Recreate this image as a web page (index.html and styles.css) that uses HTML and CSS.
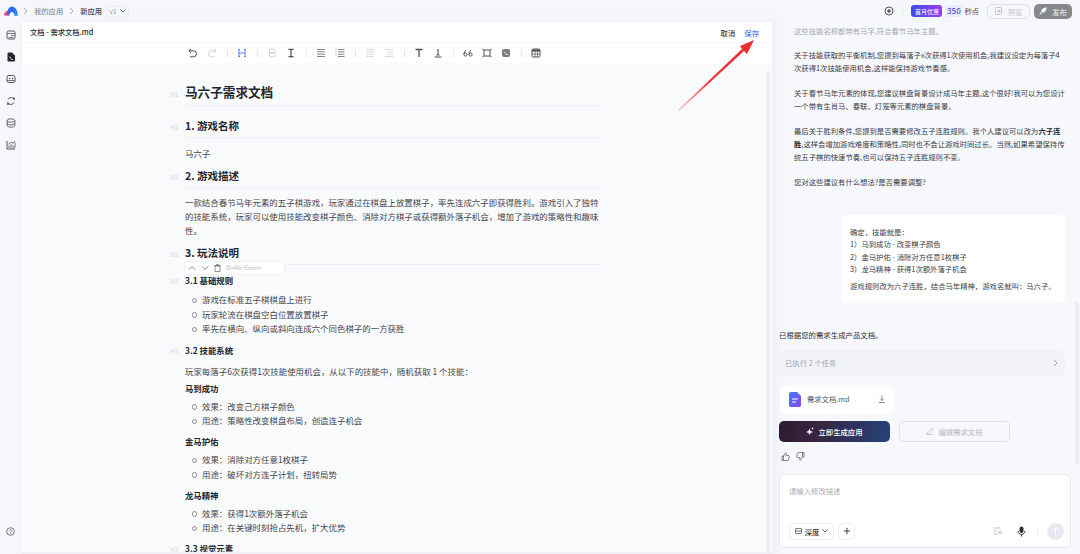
FILE: index.html
```html
<!DOCTYPE html>
<html lang="zh-CN">
<head>
<meta charset="utf-8">
<title>马六子需求文档</title>
<link rel="stylesheet" href="styles.css">
</head>
<body>
<header class="topbar">
  <div class="crumbs">
    <svg class="logo" width="14" height="10" viewBox="0 0 14 10"><path d="M0 9.500C0 6.500 1.800 4.800 4 5L5.500 9.500Z" fill="#f0488c"/><path d="M2.800 9.500C3 4 5 .5 8 .5s5.600 3.500 5.800 9h-3.300C10.200 7.500 9.200 6 8 6S5.500 7.500 5.200 9.500Z" fill="#2b6cf0"/><path d="M11 4l2.800 5.500h-3.400z" fill="#18a6e8"/></svg>
    <svg class="chev" width="5" height="8" viewBox="0 0 5 8"><path d="M1 1l3 3-3 3" fill="none" stroke="#a9adb6"/></svg>
    <span class="crumb">我的应用</span>
    <svg class="chev" width="5" height="8" viewBox="0 0 5 8"><path d="M1 1l3 3-3 3" fill="none" stroke="#a9adb6"/></svg>
    <span class="crumb crumb-now">新应用</span>
    <span class="version">v1 <svg width="6" height="4" viewBox="0 0 6 4"><path d="M.5.500 3 3 5.500.500" fill="none" stroke="#777"/></svg></span>
  </div>
  <div class="top-actions">
    <svg width="10" height="10" viewBox="0 0 10 10"><circle cx="5" cy="5" r="4" fill="none" stroke="#555" stroke-width="1"/><circle cx="5" cy="5" r="1.800" fill="#555"/></svg>
    <i class="top-sep"></i>
    <span class="promo">首月优惠</span>
    <span class="points">350</span>
    <span class="points-label">秒点</span>
    <span class="btn-preview"><svg width="8" height="8" viewBox="0 0 8 8"><rect x=".5" y=".5" width="6" height="7" rx="1" fill="none" stroke="#c2c5cc"/><circle cx="4" cy="4" r="1.500" fill="#c2c5cc"/></svg>预览</span>
    <span class="btn-publish"><svg width="8" height="8" viewBox="0 0 8 8"><path d="M7.500.500C5 .5 3 1.500 2 4L4 6C6.500 5 7.500 3 7.500.500ZM1.500 5 .5 7.500 3 6.500Z" fill="#fff"/></svg>发布</span>
  </div>
</header>

<div class="main">
  <nav class="sidebar">
    <div class="side-top">
      <svg width="10" height="10" viewBox="0 0 10 10"><rect x="1" y="1" width="8" height="8" rx="1.500" fill="none" stroke="#555" stroke-width="1"/><path d="M1 3.500h8M5 5.500h3M2.500 7.500h5" stroke="#555" stroke-width=".8"/></svg>
      <svg width="10" height="10" viewBox="0 0 10 10"><path d="M1.500 1.500A1 1 0 0 1 2.500.5H6L9 3.500V8.500A1 1 0 0 1 8 9.500H2.500A1 1 0 0 1 1.500 8.500Z" fill="#23262d"/><path d="M3.500 4.500 5.500 7.500H7" fill="none" stroke="#fff" stroke-width=".8"/></svg>
      <svg width="10" height="10" viewBox="0 0 10 10"><rect x="1" y="1.500" width="8" height="7" rx="1.800" fill="none" stroke="#555" stroke-width="1"/><path d="M1 6.500h8" stroke="#555" stroke-width=".8"/><circle cx="3.500" cy="4.500" r=".8" fill="#555"/><circle cx="6.500" cy="4.500" r=".8" fill="#555"/></svg>
      <svg width="10" height="10" viewBox="0 0 10 10"><path d="M2 3.500A3.500 3.500 0 0 1 8.500 4M8 6.500A3.500 3.500 0 0 1 1.500 6" fill="none" stroke="#555" stroke-width="1"/><circle cx="8" cy="2.500" r="1" fill="#555"/><circle cx="2" cy="8" r="1" fill="#555"/></svg>
      <svg width="10" height="10" viewBox="0 0 10 10"><ellipse cx="5" cy="2.500" rx="3.800" ry="1.700" fill="none" stroke="#555" stroke-width=".9"/><path d="M1.200 2.500v5C1.200 8.500 3 9.200 5 9.200s3.800-.7 3.800-1.700v-5M1.200 5.200C1.200 6.200 3 6.900 5 6.900s3.800-.7 3.800-1.700" fill="none" stroke="#555" stroke-width=".9"/></svg>
      <svg width="10" height="10" viewBox="0 0 10 10"><path d="M1 1v8h8" fill="none" stroke="#555" stroke-width="1"/><path d="M3 8V5.500M5 8V4M7 8V5M9 8V2.500M2.500 4 5 2l2 1.500L9 1" fill="none" stroke="#555" stroke-width=".8"/></svg>
    </div>
    <svg width="9" height="9" viewBox="0 0 9 9"><circle cx="4.500" cy="4.500" r="3.800" fill="none" stroke="#555" stroke-width=".8"/><path d="M3.300 3.500C3.500 2.300 5.600 2.300 5.700 3.500 5.700 4.400 4.500 4.400 4.500 5.500M4.500 6.200v.8" fill="none" stroke="#555" stroke-width=".7"/></svg>
  </nav>

  <section class="editor">
    <div class="editor-head">
      <span class="file-title">文档 - 需求文档.md</span>
      <div class="head-actions"><span class="cancel">取消</span><span class="save">保存</span></div>
    </div>
    <div class="toolbar">
      <svg class="tool" viewBox="0 0 10 10"><path d="M3 .8.800 2.800 3 4.800M1 2.800h4.500a2.800 2.800 0 0 1 0 6H2" fill="none" stroke="#333" stroke-width="1"/></svg>
      <svg class="tool tool-off" viewBox="0 0 10 10"><path d="M7 .8 9.200 2.800 7 4.800M9 2.800H4.500a2.800 2.800 0 0 0 0 6H8" fill="none" stroke="#333" stroke-width="1"/></svg>
      <i class="tool-sep"></i>
      <svg class="tool tool-on" viewBox="0 0 10 10"><path d="M2 1.500v7M8 1.500v7M2 5h6M1 1.500h2M7 1.500h2M1 8.500h2M7 8.500h2" fill="none" stroke="#5f86f5" stroke-width="1.100"/></svg>
      <i class="tool-sep"></i>
      <svg class="tool tool-off" viewBox="0 0 10 10"><path d="M2.500 1.200H6a1.800 1.800 0 0 1 0 3.800H2.500Zm0 3.800H6.500a1.900 1.900 0 0 1 0 3.800h-4Z" fill="none" stroke="#333"/></svg>
      <svg class="tool" viewBox="0 0 10 10"><path d="M2.500 1.300h5M2.500 8.700h5M5 1.300v7.400" fill="none" stroke="#333" stroke-width="1.200"/></svg>
      <i class="tool-sep"></i>
      <svg class="tool" viewBox="0 0 10 10"><path d="M1 1.500h8M1 3.800h8M1 6.200h8M1 8.500h8" stroke="#333" stroke-width=".7"/></svg>
      <svg class="tool" viewBox="0 0 10 10"><path d="M3 1.500h6.500M3 3.800h6.500M3 6.200h6.500M3 8.500h6.500M.5 1.500h1M.5 4h1M.5 7h1" stroke="#333" stroke-width=".7"/></svg>
      <i class="tool-sep"></i>
      <svg class="tool tool-off" viewBox="0 0 10 10"><path d="M1 1.500h8M1 3.800h8M1 6.200h8M1 8.500h8" stroke="#333" stroke-width=".8"/></svg>
      <svg class="tool tool-off" viewBox="0 0 10 10"><path d="M1 1.500h8M3 3.800h6M3 6.200h6M1 8.500h8" stroke="#333" stroke-width=".8"/></svg>
      <i class="tool-sep"></i>
      <svg class="tool" viewBox="0 0 10 10"><path d="M1.500 1.500h7M5 1.500v7.500" fill="none" stroke="#333" stroke-width="1.300"/></svg>
      <svg class="tool" viewBox="0 0 10 10"><path d="M1.500 9h7M5 1v6M3.500 7h3" fill="none" stroke="#333" stroke-width="1.100"/></svg>
      <i class="tool-sep"></i>
      <svg class="tool" viewBox="0 0 10 10"><path d="M3 2C1.500 3.500 1 5 1 6.500M8 2C6.500 3.500 6 5 6 6.500" fill="none" stroke="#333"/><circle cx="2.500" cy="6.500" r="1.600" fill="none" stroke="#333"/><circle cx="7.500" cy="6.500" r="1.600" fill="none" stroke="#333"/></svg>
      <svg class="tool" viewBox="0 0 10 10"><path d="M2 2h6v6H2Z" fill="none" stroke="#333"/><path d="M.5 1 2 2M9.500 1 8 2M.5 9 2 8M9.500 9 8 8" stroke="#333"/></svg>
      <svg class="tool" viewBox="0 0 10 10"><rect x="1" y="1" width="8" height="8" rx="2" fill="#666"/><path d="M3 3.500l2 3h2" fill="none" stroke="#fff" stroke-width=".8"/></svg>
      <i class="tool-sep"></i>
      <svg class="tool" viewBox="0 0 10 10"><rect x="1" y="1" width="8" height="8" rx="1.200" fill="none" stroke="#333"/><path d="M1 2.500h8" stroke="#333" stroke-width="2"/><path d="M1 6h8M4 3v6M6.500 3v6" stroke="#333" stroke-width=".7"/></svg>
    </div>
    <div class="doc-area">
      <article class="doc">
        <div class="head h1"><span class="tag">H1</span><h1>马六子需求文档</h1></div>
        <div class="head h2"><span class="tag">H2</span><h2>1. 游戏名称</h2></div>
        <p class="para para-name">马六子</p>
        <div class="head h2"><span class="tag">H2</span><h2>2. 游戏描述</h2></div>
        <p class="para para-desc">一款结合春节马年元素的五子棋游戏，玩家通过在棋盘上放置棋子，率先连成六子即获得胜利。游戏引入了独特的技能系统，玩家可以使用技能改变棋子颜色、消除对方棋子或获得额外落子机会，增加了游戏的策略性和趣味性。</p>
        <div class="head h2 h2-tools"><span class="tag">H2</span><h2>3. 玩法说明</h2>
          <div class="block-tools">
            <svg width="8" height="6" viewBox="0 0 8 6"><path d="M.8 4.800 4 1.500l3.200 3.300" fill="none" stroke="#666" stroke-width=".8"/></svg>
            <svg width="8" height="6" viewBox="0 0 8 6"><path d="M.8 1.200 4 4.500l3.200-3.300" fill="none" stroke="#666" stroke-width=".8"/></svg>
            <svg width="7" height="8" viewBox="0 0 7 8"><path d="M1 2h5v5.500H1ZM0 1.500h7M2.500 1.500V.5h2v1" fill="none" stroke="#666" stroke-width=".7"/></svg>
            <span>ID&lt;Alt+Enter&gt;</span>
          </div>
        </div>
        <div class="head h3 h3-first"><span class="tag">H3</span><h3>3.1 基础规则</h3></div>
        <ul class="list list-first">
          <li>游戏在标准五子棋棋盘上进行</li>
          <li>玩家轮流在棋盘空白位置放置棋子</li>
          <li>率先在横向、纵向或斜向连成六个同色棋子的一方获胜</li>
        </ul>
        <div class="head h3"><span class="tag">H3</span><h3>3.2 技能系统</h3></div>
        <p class="para para-skill">玩家每落子6次获得1次技能使用机会，从以下的技能中，随机获取 1 个技能：</p>
        <h4 class="skill skill-first">马到成功</h4>
        <ul class="list">
          <li>效果：改变己方棋子颜色</li>
          <li>用途：策略性改变棋盘布局，创造连子机会</li>
        </ul>
        <h4 class="skill">金马护佑</h4>
        <ul class="list">
          <li>效果：消除对方任意1枚棋子</li>
          <li>用途：破坏对方连子计划，扭转局势</li>
        </ul>
        <h4 class="skill">龙马精神</h4>
        <ul class="list">
          <li>效果：获得1次额外落子机会</li>
          <li>用途：在关键时刻抢占先机，扩大优势</li>
        </ul>
        <div class="head h3 h3-last"><span class="tag">H3</span><h3>3.3 视觉元素</h3></div>
      </article>
      <div class="doc-scroll"></div>
    </div>
  </section>

  <aside class="chat">
    <div class="reply">
      <p class="faded">这些技能名称都带有马字,符合春节马年主题。</p>
      <p>关于技能获取的平衡机制,您提到每落子x次获得1次使用机会,我建议设定为每落子4<br>次获得1次技能使用机会,这样能保持游戏节奏感。</p>
      <p>关于春节马年元素的体现,您建议棋盘背景设计成马年主题,这个很好!我可以为您设计<br>一个带有生肖马、春联、灯笼等元素的棋盘背景。</p>
      <p>最后关于胜利条件,您提到是否需要修改五子连胜规则。我个人建议可以改为<b>六子连<br>胜</b>,这样会增加游戏难度和策略性,同时也不会让游戏时间过长。当然,如果希望保持传<br>统五子棋的快速节奏,也可以保持五子连胜规则不变。</p>
      <p>您对这些建议有什么想法?是否需要调整?</p>
    </div>
    <div class="user-card">
      <div>确定，技能就是：</div>
      <div>1）马到成功 - 改变棋子颜色</div>
      <div>2）金马护佑 - 消除对方任意1枚棋子</div>
      <div>3）龙马精神 - 获得1次额外落子机会</div>
      <div class="user-last">游戏规则改为六子连胜，结合马年精神，游戏名就叫：马六子。</div>
    </div>
    <p class="gen-note">已根据您的需求生成产品文档。</p>
    <div class="task-bar"><span>已执行 2 个任务</span><svg width="5" height="8" viewBox="0 0 5 8"><path d="M1 1l3 3-3 3" fill="none" stroke="#a0a4ad"/></svg></div>
    <div class="file-card">
      <svg width="12" height="15" viewBox="0 0 12 15"><defs><linearGradient id="docg" x1="0" y1="0" x2="1" y2="1"><stop offset="0" stop-color="#3f7bf6"/><stop offset="1" stop-color="#8a45ee"/></linearGradient></defs><path d="M2 0h6l4 4v9a2 2 0 0 1-2 2H2a2 2 0 0 1-2-2V2a2 2 0 0 1 2-2Z" fill="url(#docg)"/><path d="M3 7h6M3 10h4" stroke="#fff"/></svg>
      <span class="file-name">需求文档.md</span>
      <svg width="8" height="8" viewBox="0 0 8 8"><path d="M4 .5v5M2 3.500l2 2 2-2M.8 7.500h6.400" fill="none" stroke="#777" stroke-width=".8"/></svg>
    </div>
    <div class="actions">
      <span class="btn-gen"><svg width="8" height="8" viewBox="0 0 8 8"><path d="M3.500 1.500 4.500 4 7 5 4.500 6 3.500 8 2.500 6 0 5 2.500 4ZM6.500 0l.4 1 1 .4-1 .4-.4 1-.4-1-1-.4 1-.4Z" fill="#fff"/></svg>立即生成应用</span>
      <span class="btn-edit"><svg width="8" height="8" viewBox="0 0 8 8"><path d="M1 5.500 5.500 1 7 2.500 2.500 7H1ZM.5 7.700h7" fill="none" stroke="#b5b8c0" stroke-width=".7"/></svg>编辑需求文档</span>
    </div>
    <div class="feedback">
      <svg width="9" height="9" viewBox="0 0 9 9"><path d="M1 4h1.500v4.500H1ZM2.500 4 4.500.8c.8 0 1 .7.800 1.400L5 3.500h2.500c.6 0 .9.500.800 1L7.500 7.800c-.1.400-.4.700-.8.700H2.500" fill="none" stroke="#555" stroke-width=".7"/></svg>
      <svg width="9" height="9" viewBox="0 0 9 9"><path d="M8 5H6.500V.5H8ZM6.500 5 4.500 8.200c-.8 0-1-.7-.8-1.400L4 5.500H1.500c-.6 0-.9-.5-.8-1L1.500 1.200C1.600.8 1.900.5 2.300.5h4.200" fill="none" stroke="#555" stroke-width=".7"/></svg>
    </div>
    <div class="composer">
      <div class="placeholder">请输入修改描述</div>
      <div class="composer-row">
        <span class="mode"><svg width="7" height="6" viewBox="0 0 7 6"><rect x=".4" y=".4" width="6.200" height="5.200" rx=".8" fill="none" stroke="#333" stroke-width=".7"/><path d="M.4 3h6.200" stroke="#333" stroke-width=".7"/></svg>深度<svg width="6" height="4" viewBox="0 0 6 4"><path d="M.5.500 3 3 5.500.500" fill="none" stroke="#333" stroke-width=".8"/></svg></span>
        <span class="plus"><svg width="8" height="8" viewBox="0 0 8 8"><path d="M4 .8v6.400M.8 4h6.400" stroke="#444" stroke-width="1"/></svg></span>
        <span class="composer-spacer"></span>
        <svg width="9" height="8" viewBox="0 0 9 8"><path d="M.5 1h6.500M.5 4h4M.5 7h4M7 3.500v4M5 5.500h4" stroke="#aaa" stroke-width=".7"/></svg>
        <svg class="mic" width="9" height="11" viewBox="0 0 9 11"><rect x="2.500" y=".5" width="4" height="6.500" rx="2" fill="#333"/><path d="M1 5c0 4.500 7 4.500 7 0M4.500 8.500v2" fill="none" stroke="#333"/></svg>
        <i class="composer-sep"></i>
        <span class="send"><svg width="7" height="8" viewBox="0 0 7 8"><path d="M3.500 7.500V1M1 3.500 3.500 1 6 3.500" fill="none" stroke="#fff"/></svg></span>
      </div>
    </div>
    <div class="chat-scroll"></div>
  </aside>
</div>

<svg class="arrow" width="90" height="90" viewBox="0 0 90 90"><defs><linearGradient id="arw" x1="0" y1="1" x2="1" y2="0"><stop offset="0" stop-color="#f26a6a" stop-opacity=".3"/><stop offset=".4" stop-color="#ee3b3b"/><stop offset="1" stop-color="#e8302f"/></linearGradient></defs><path d="M2 84 66 23 64 20 78 14 71 28 68 25 3 85Z" fill="url(#arw)"/></svg>
</body>
</html>
```
FILE: styles.css
```css
* { box-sizing: border-box; }
html, body { margin: 0; height: 100%; }
body {
  width: 1080px;
  height: 554px;
  overflow: hidden;
  position: relative;
  display: flex;
  flex-direction: column;
  background: #f6f7fb;
  color: #2c2f36;
  font-family: "Noto Sans CJK SC", "Noto Sans", sans-serif;
  font-size: 7.350px;
}
p, h1, h2, h3, h4, ul { margin: 0; padding: 0; }

.topbar { height: 22px; flex: none; display: flex; align-items: center; justify-content: space-between; padding: 0 8px 0 4px; }
.crumbs { display: flex; align-items: center; }
.logo { margin-right: 5px; }
.chev { margin-right: 6px; }
.crumb { font-size: 7.300px; color: #7b7f88; margin-right: 6px; }
.crumb-now { color: #44474e; margin-right: 4px; font-weight: 500; }
.version { width: 23px; height: 11px; display: flex; align-items: center; justify-content: center; gap: 3px; border: 1px solid #eceef3; border-radius: 3px; color: #999; font-size: 6.500px; }
.top-actions { display: flex; align-items: center; }
.top-sep { width: 1px; height: 8px; background: #e8eaf0; margin: 0 8px; }
.promo { width: 31px; height: 12px; display: flex; align-items: center; justify-content: center; border-radius: 3px; color: #fff; font-size: 6px; background: linear-gradient(90deg, #3e4ee8, #9a3cf0); }
.points { width: 17px; height: 12px; margin-left: 3px; border-radius: 2px; background: #e9edfd; color: #3d55d8; font-size: 8px; font-weight: 500; text-align: center; line-height: 12px; }
.points-label { margin-left: 2px; font-size: 7.300px; color: #444; }
.btn-preview { width: 43px; height: 15px; margin-left: 8px; display: flex; align-items: center; justify-content: center; gap: 5px; border: 1px solid #dfe1e7; border-radius: 5px; color: #c2c5cc; }
.btn-publish { width: 38px; height: 15px; margin-left: 4px; display: flex; align-items: center; justify-content: center; gap: 5px; border-radius: 5px; background: #86888c; color: #f2f2f2; }

.main { flex: 1; display: flex; min-height: 0; }
.sidebar { width: 22px; flex: none; display: flex; flex-direction: column; align-items: center; justify-content: space-between; padding: 8px 1px 18px 0; }
.side-top { display: flex; flex-direction: column; gap: 12px; }
.side-top svg { display: block; }

.editor { width: 750px; flex: none; display: flex; flex-direction: column; background: #f9fafc; box-shadow: 2px 0 6px rgba(225, 230, 240, .5); border-bottom: 2px solid #eef0f4; }
.editor-head { height: 21px; flex: none; display: flex; align-items: center; justify-content: space-between; padding: 0 13px 0 8px; background: #fff; border-bottom: 1px solid #f4f5f8; }
.file-title { font-size: 7.300px; font-weight: 500; color: #2a2c33; }
.head-actions { display: flex; gap: 9px; }
.cancel { color: #444; font-weight: 500; }
.save { color: #4f7ef5; font-weight: 500; }
.toolbar { height: 20px; flex: none; display: flex; align-items: center; gap: 5px; padding-left: 164px; background: #fff; }
.tool { width: 14px; height: 10px; flex: none; opacity: .85; }
.tool-on { opacity: 1; }
.tool-off { opacity: .22; }
.tool-sep { width: 1px; height: 7px; margin: 0 2.500px; flex: none; background: #e4e6eb; }

.doc-area { flex: 1; min-height: 0; display: flex; overflow: hidden; }
.doc { width: 416px; flex: none; margin-left: 163px; padding-top: 19px; }
.head { display: flex; align-items: baseline; margin-left: -15px; }
.tag { width: 15px; flex: none; color: #d4d7dd; font-size: 6.500px; }
.head h1, .head h2, .head h3 { flex: 1; color: #23262d; }
.h1 h1 { font-size: 12.600px; line-height: 20px; padding-bottom: 3px; border-bottom: 1px solid #f0f1f5; font-weight: 700; }
.h2 { margin-top: 8px; }
.h1 + .h2 { margin-top: 12px; }
.h2 h2 { font-size: 10.500px; line-height: 16px; padding-bottom: 3px; border-bottom: 1px solid #f0f1f5; font-weight: 700; }
.h2-tools { position: relative; }
.h3 { margin-top: 7px; }
.h3-first { margin-top: 8px; }
.h3-last { margin-top: 6px; }
.h3 h3 { font-size: 8.400px; line-height: 14px; font-weight: 700; }
.para { font-size: 8.450px; color: #43464d; }
.para-name { line-height: 14px; margin-top: 8px; }
.para-desc { line-height: 14px; margin-top: 7px; }
.para-skill { line-height: 14px; margin-top: 7px; }
.skill { margin-top: 6.500px; font-size: 8.400px; line-height: 14px; color: #23262d; font-weight: 700; }
.skill-first { margin-top: 3px; }
.list { list-style: none; margin-top: 4px; }
.list-first { margin-top: 5px; }
.list li { position: relative; padding-left: 17px; font-size: 8.450px; line-height: 14.500px; color: #43464d; }
.list li::before { content: ""; position: absolute; left: 6.500px; top: 5.500px; width: 3.500px; height: 3.500px; border: 1px solid #8a8d94; border-radius: 50%; }
.block-tools { position: absolute; left: 15px; top: 17px; width: 99px; height: 12px; display: flex; align-items: center; gap: 5px; padding-left: 3px; background: #fff; box-shadow: 0 0 2px rgba(200, 205, 215, .4); color: #b8bbc2; font-size: 5.500px; }
.doc-scroll { width: 3.500px; margin: 8px 0 0 165px; background: #eceef3; border-radius: 2px; }

.chat { flex: 1; min-width: 0; position: relative; display: flex; flex-direction: column; padding-left: 7px; background: linear-gradient(90deg, #eef1f8, #f7f8fc 14px); }
.reply { padding: 2.500px 0 0 15px; line-height: 12.800px; color: #3a3d44; }
.reply p { margin-bottom: 12.200px; white-space: nowrap; }
.reply b { font-weight: 700; color: #23262d; }
.reply .faded { color: #a5a8b0; }
.user-card { width: 223px; margin: 14.500px 0 0 63px; padding: 10.500px 8px 10px; background: #fff; border-radius: 4px; line-height: 12.500px; color: #3a3d44; }
.user-last { margin-top: 4.500px; }
.gen-note { margin-top: 25px; line-height: 14px; font-size: 7.400px; color: #2c2f36; }
.task-bar { width: 286px; height: 26px; margin-top: 8px; display: flex; align-items: center; justify-content: space-between; padding: 0 7px 0 6px; border-radius: 6px; background: #f1f3f8; color: #a2a5ad; }
.file-card { width: 114px; height: 29px; margin-top: 9px; margin-left: 1px; display: flex; align-items: center; padding: 0 8px 0 9px; border-radius: 6px; background: #fff; }
.file-name { flex: 1; margin-left: 6px; font-size: 7.300px; color: #53565d; }
.actions { display: flex; gap: 9px; margin-top: 7px; }
.btn-gen { width: 111px; height: 21px; display: flex; align-items: center; justify-content: center; gap: 4px; border-radius: 5px; color: #fff; font-weight: 500; background: linear-gradient(100deg, #2a1a30 0%, #3a2440 35%, #2b3a6a 80%, #23427a 100%); }
.btn-edit { width: 111px; height: 21px; display: flex; align-items: center; justify-content: center; gap: 4px; border: 1px solid #dfe1e7; border-radius: 5px; color: #b5b8c0; }
.feedback { height: 10px; margin: 10px 0 0 2px; display: flex; gap: 6px; }
.composer { width: 292px; height: 74px; margin-top: 12px; display: flex; flex-direction: column; justify-content: space-between; padding: 10px 6px 7px 9px; background: #fff; border: 1px solid #e6e9f0; border-radius: 6px; }
.placeholder { color: #a9acb4; }
.composer-row { display: flex; align-items: center; }
.mode { width: 45px; height: 17px; display: flex; align-items: center; justify-content: center; gap: 3px; border: 1px solid #eceef3; border-radius: 4px; color: #333; font-weight: 500; }
.plus { width: 17px; height: 17px; margin-left: 4px; display: flex; align-items: center; justify-content: center; border: 1px solid #eceef3; border-radius: 4px; }
.composer-spacer { flex: 1; }
.mic { margin-left: 15px; }
.composer-sep { width: 1px; height: 6px; margin: 0 9px 0 11px; background: #e4e6eb; }
.send { width: 17px; height: 17px; display: flex; align-items: center; justify-content: center; border-radius: 50%; background: #e6e9f2; }
.chat-scroll { position: absolute; right: 1px; top: 280px; width: 4px; height: 163px; background: #eaecf2; border-radius: 2px; }

.arrow { position: absolute; left: 676px; top: 26px; }
```
